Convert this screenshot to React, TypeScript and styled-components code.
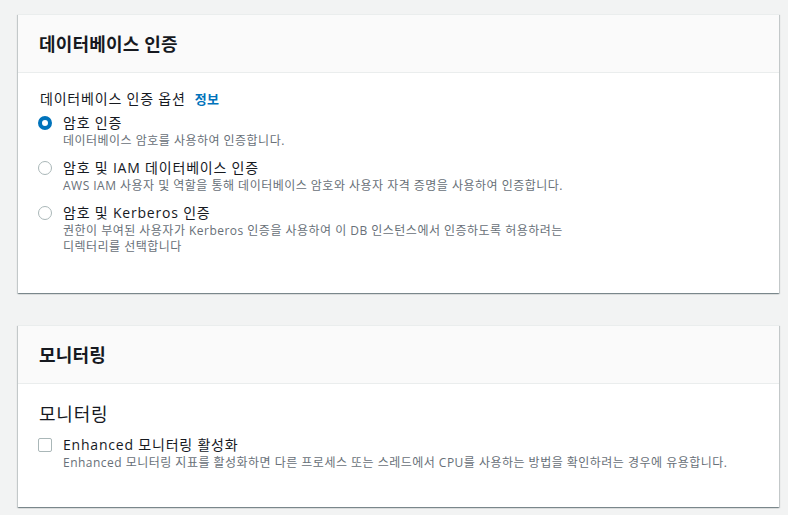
import React from "react";
import styled, { createGlobalStyle } from "styled-components";

const Global = createGlobalStyle`
  html, body { margin: 0; padding: 0; background: #f2f3f3; }
  body {
    font-family: "Open Sans", "Noto Sans CJK KR", sans-serif;
    color: #16191f;
    -webkit-font-smoothing: antialiased;
  }
`;

const Page = styled.div`
  display: flex;
  flex-direction: column;
  gap: 32px;
  padding: 14px 9px 8px 18px;
`;

const Card = styled.section`
  background: #fff;
  box-shadow: 0 1px 1px 0 rgba(0, 28, 36, 0.3), 1px 1px 1px 0 rgba(0, 28, 36, 0.15),
    -1px 1px 1px 0 rgba(0, 28, 36, 0.15);
  border-top: 1px solid #eaeded;
`;

const CardHeader = styled.header`
  height: 57px;
  display: flex;
  align-items: center;
  padding: 0 20px 0 21px;
  background: #fafafa;
  border-bottom: 1px solid #eaeded;
`;

const Title = styled.h2`
  margin: 0;
  font-size: 18px;
  font-weight: 700;
  line-height: 24px;
  letter-spacing: 0.01em;
  color: #16191f;
`;

const CardBody = styled.div<{ $pb: number }>`
  padding: 16px 20px ${(p) => p.$pb}px 20px;
  display: flex;
  flex-direction: column;
  letter-spacing: 0.05em;
  word-break: keep-all;
`;

const FieldLabel = styled.div`
  font-size: 14px;
  line-height: 20px;
  padding-left: 2px;
  display: flex;
  align-items: center;
  gap: 9px;
`;

const InfoLink = styled.span`
  color: #0073bb;
  font-size: 13px;
  font-weight: 700;
  letter-spacing: 0.02em;
`;

const OptionList = styled.div<{ $max?: number }>`
  display: flex;
  flex-direction: column;
  gap: 9px;
  margin-top: 4px;
  max-width: ${(p) => (p.$max ? `${p.$max}px` : "none")};
`;

const Option = styled.label`
  display: grid;
  grid-template-columns: 14px 1fr;
  column-gap: 11px;
  align-items: start;
`;

const Radio = styled.span<{ $checked?: boolean }>`
  box-sizing: border-box;
  width: 14px;
  height: 14px;
  margin-top: 3px;
  border-radius: 50%;
  background: #fff;
  border: ${(p) => (p.$checked ? "4px solid #0073bb" : "1.5px solid #aab7b8")};
`;

const Checkbox = styled.span`
  box-sizing: border-box;
  width: 14px;
  height: 14px;
  margin-top: 3px;
  border-radius: 2px;
  background: #fff;
  border: 1.5px solid #aab7b8;
`;

const OptionText = styled.div`
  display: flex;
  flex-direction: column;
`;

const OptionLabel = styled.span`
  font-size: 14px;
  line-height: 20px;
  color: #16191f;
`;

const OptionDesc = styled.span`
  font-size: 12px;
  line-height: 16px;
  letter-spacing: 0.04em;
  color: #687078;
`;

const SubHeading = styled.div`
  font-size: 18px;
  line-height: 24px;
  font-weight: 400;
  margin: 2px 0 9px 1px;
`;

export default function App() {
  return (
    <>
      <Global />
      <Page>
        <Card>
          <CardHeader>
            <Title>데이터베이스 인증</Title>
          </CardHeader>
          <CardBody $pb={38}>
            <FieldLabel>
              데이터베이스 인증 옵션 <InfoLink>정보</InfoLink>
            </FieldLabel>
            <OptionList $max={560}>
              <Option>
                <Radio $checked />
                <OptionText>
                  <OptionLabel>암호 인증</OptionLabel>
                  <OptionDesc>데이터베이스 암호를 사용하여 인증합니다.</OptionDesc>
                </OptionText>
              </Option>
              <Option>
                <Radio />
                <OptionText>
                  <OptionLabel>암호 및 IAM 데이터베이스 인증</OptionLabel>
                  <OptionDesc>
                    AWS IAM 사용자 및 역할을 통해 데이터베이스 암호와 사용자 자격 증명을 사용하여 인증합니다.
                  </OptionDesc>
                </OptionText>
              </Option>
              <Option>
                <Radio />
                <OptionText>
                  <OptionLabel>암호 및 Kerberos 인증</OptionLabel>
                  <OptionDesc>
                    권한이 부여된 사용자가 Kerberos 인증을 사용하여 이 DB 인스턴스에서 인증하도록 허용하려는 디렉터리를 선택합니다
                  </OptionDesc>
                </OptionText>
              </Option>
            </OptionList>
          </CardBody>
        </Card>
        <Card>
          <CardHeader>
            <Title>모니터링</Title>
          </CardHeader>
          <CardBody $pb={36}>
            <SubHeading>모니터링</SubHeading>
            <Option>
              <Checkbox />
              <OptionText>
                <OptionLabel>Enhanced 모니터링 활성화</OptionLabel>
                <OptionDesc>
                  Enhanced 모니터링 지표를 활성화하면 다른 프로세스 또는 스레드에서 CPU를 사용하는 방법을 확인하려는 경우에 유용합니다.
                </OptionDesc>
              </OptionText>
            </Option>
          </CardBody>
        </Card>
      </Page>
    </>
  );
}
